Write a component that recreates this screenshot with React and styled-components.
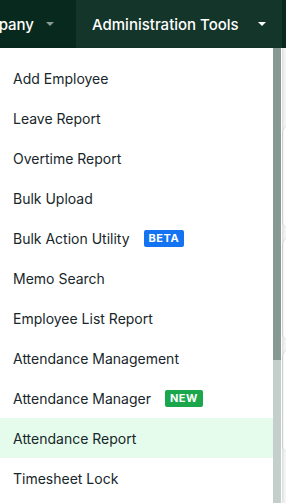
import styled, { createGlobalStyle } from 'styled-components';

const Global = createGlobalStyle`
  html, body {
    margin: 0;
    padding: 0;
    background: #f3f5f4;
    font-family: Inter, "Noto Sans", sans-serif;
    overflow: hidden;
  }
`

const Page = styled.div`
  position: relative;
  width: 286px;
  height: 503px;
  overflow: hidden;
`

const Header = styled.header`
  display: flex;
  justify-content: flex-end;
  height: 48px;
  padding-right: 4px;
  background-color: #082a1e;
  overflow: hidden;
`

const NavItem = styled.div`
  display: flex;
  flex-shrink: 0;
  align-items: center;
  gap: ${p => p.$gap || '12px'};
  padding: 0 ${p => p.$padRight || '16px'} 0 16px;
  color: #ffffff;
  font-size: 15px;
  font-weight: 500;
  white-space: nowrap;
  background-color: ${p => p.$active ? '#13352a' : 'transparent'};
  width: ${p => p.$width || 'auto'};
  box-sizing: border-box;
`

const Label = styled.span`
  flex: ${p => p.$grow ? 1 : 'none'};
`

const Caret = styled.span`
  width: 0;
  height: 0;
  border-left: 4px solid transparent;
  border-right: 4px solid transparent;
  border-top: 4px solid ${p => p.$dim ? '#8a9a94' : '#ffffff'};
`

const Body = styled.div`
  display: flex;
  justify-content: flex-end;
  padding-top: 78px;
`

const Card = styled.div`
  width: 20px;
  height: 100px;
  margin-right: -18px;
  margin-bottom: 10px;
  background: #ffffff;
  border: 1px solid #dfe4e2;
  border-radius: 6px;
`

const Dropdown = styled.div`
  position: absolute;
  top: 48px;
  left: 0;
  width: 282px;
  height: 455px;
  display: flex;
  background: #ffffff;
  box-shadow: 1px 0 2px rgba(0, 0, 0, 0.12);
`

const List = styled.ul`
  flex: 1;
  list-style: none;
  margin: 0;
  padding: 10px 0 0;
`

const Item = styled.li`
  display: flex;
  align-items: center;
  gap: 14px;
  height: 40px;
  padding: 0 13px;
  font-size: 14px;
  color: #17262a;
  background-color: ${p => p.$hover ? '#e5fcec' : 'transparent'};
`

const Badge = styled.span`
  display: inline-flex;
  align-items: center;
  height: 17px;
  padding: 0 5px;
  border-radius: 2px;
  font-size: 11px;
  font-weight: 700;
  letter-spacing: 0.5px;
  color: #ffffff;
  background-color: ${p => p.$color};
`

const Track = styled.div`
  width: 8px;
  margin-right: 1px;
  background: #c4cfcb;
  display: flex;
  flex-direction: column;
`

const Thumb = styled.div`
  height: 312px;
  background: #869a93;
`

const items = [
  { label: 'Add Employee' },
  { label: 'Leave Report' },
  { label: 'Overtime Report' },
  { label: 'Bulk Upload' },
  { label: 'Bulk Action Utility', badge: 'BETA', color: '#1473f0' },
  { label: 'Memo Search' },
  { label: 'Employee List Report' },
  { label: 'Attendance Management' },
  { label: 'Attendance Manager', badge: 'NEW', color: '#1aa64a' },
  { label: 'Attendance Report', hover: true },
  { label: 'Timesheet Lock' },
]

export default function App() {
  return (
    <Page>
      <Global />
      <Header>
        <NavItem $padRight="22px">
          <Label>Company</Label>
          <Caret $dim />
        </NavItem>
        <NavItem $active $width="206px">
          <Label $grow>Administration Tools</Label>
          <Caret />
        </NavItem>
      </Header>
      <Body>
        <div>
          <Card />
          <Card />
          <Card />
        </div>
      </Body>
      <Dropdown>
        <List>
          {items.map(it => (
            <Item key={it.label} $hover={it.hover}>
              {it.label}
              {it.badge && <Badge $color={it.color}>{it.badge}</Badge>}
            </Item>
          ))}
        </List>
        <Track>
          <Thumb />
        </Track>
      </Dropdown>
    </Page>
  );
}
